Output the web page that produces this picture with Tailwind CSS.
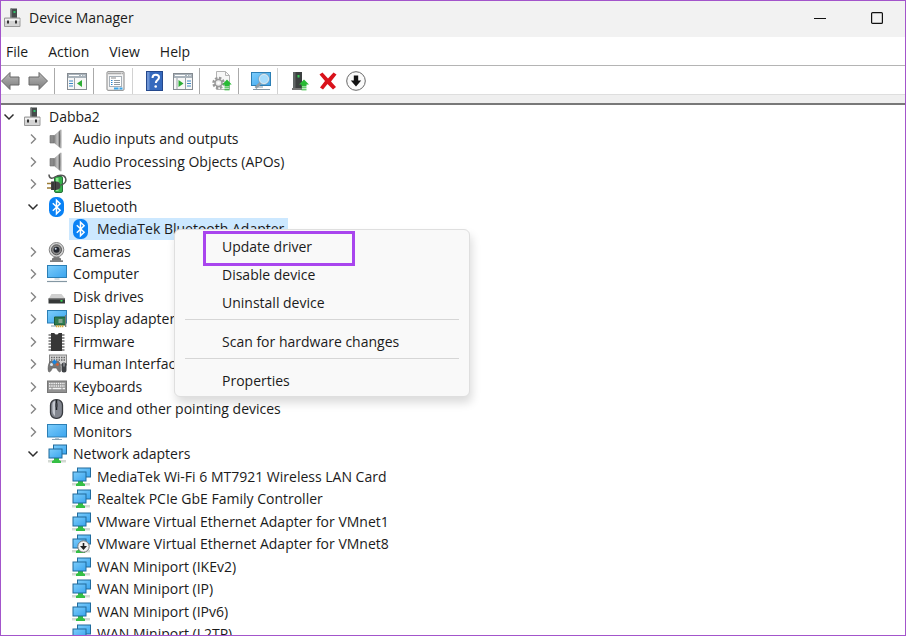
<!DOCTYPE html>
<html lang="en">
<head>
  <meta charset="utf-8">
  <meta name="viewport" content="width=device-width, initial-scale=1">
  <title>Device Manager</title>
  <script src="https://cdn.jsdelivr.net/npm/@tailwindcss/browser@4"></script>
</head>
<body class="relative flex h-screen flex-col overflow-hidden border border-[#a355cb] bg-white font-['Open_Sans','Noto_Sans',sans-serif] text-sm text-[#1b1b1b]">

  <!-- icon sprite, kept in the layout so its gradients still paint -->
  <svg class="absolute size-0" aria-hidden="true">
    <defs>
      <linearGradient id="screen" x1="0" y1="0" x2="1" y2="1">
        <stop offset="0" stop-color="#7dcdfb"/><stop offset="1" stop-color="#3aa4ee"/>
      </linearGradient>
      <linearGradient id="metal" x1="0" y1="0" x2="1" y2="0">
        <stop offset="0" stop-color="#7c7c7c"/><stop offset=".5" stop-color="#c2c2c2"/><stop offset="1" stop-color="#6a6a6a"/>
      </linearGradient>
      <linearGradient id="arrow" x1="0" y1="0" x2="0" y2="1">
        <stop offset="0" stop-color="#b9b9b9"/><stop offset="1" stop-color="#7d7d7d"/>
      </linearGradient>
    </defs>
    <symbol id="device" viewBox="0 0 20 20">
      <path d="M7.500 .5h6.500v10h-6.500z" fill="#454b4b"/><path d="M7.500 .5h1.500v10h-1.500z" fill="#6b7070"/>
      <rect x="10.500" y="3" width="2" height="2" fill="#2fc46a"/>
      <path d="M1.500 10h15.500v8.500h-15.500z" fill="#d4d4d4" stroke="#9a9a9a"/><path d="M2 11h14.500v2h-14.500z" fill="#efefef"/>
      <path d="M4 12.500h2v3h-2zM12 12.500h2v3h-2z" fill="#333"/>
    </symbol>
    <symbol id="speaker" viewBox="0 0 20 20">
      <path d="M3 6.500h4v7.500h-4z" fill="#8a8a8a" stroke="#6d6d6d" stroke-width=".6"/>
      <path d="M7 6.500L13.500 .7V19.300L7 14z" fill="url(#metal)"/><path d="M12 1.500c2 4 2 13 0 17z" fill="#6a6a6a"/>
      <path d="M13.300 .7h1.200v18.600h-1.200z" fill="#a6a6a6"/>
    </symbol>
    <symbol id="battery" viewBox="0 0 20 20">
      <path d="M8 2.500h6V1h-4v1.500z" fill="#999"/><rect x="7.500" y="2.500" width="8" height="16" rx="1.500" fill="#36b24a" stroke="#27713a"/>
      <path d="M9 4h2.500v13h-2.500z" fill="#8ae58f"/>
      <path d="M2 .5c0 4 3 4.500 6 2.500s9-3 10.500 1-1.500 6-4.500 7" fill="none" stroke="#555" stroke-width="1.500"/>
      <path d="M0 9.500h4M0 14h4" stroke="#9b7b35" stroke-width="1.600"/>
      <path d="M4 7.500h5c3 0 4.500 2 4.500 4.300s-1.500 4.200-4.500 4.200h-5z" fill="#454545"/><path d="M6 7.500v8.500M8.500 7.500v8.500" stroke="#222" stroke-width=".7"/>
    </symbol>
    <symbol id="bluetooth" viewBox="0 0 20 20">
      <rect x="2" y="0" width="15" height="20" rx="6.500" fill="#0a82f5"/>
      <path d="M5.800 6.200l7.300 7-3.600 3.500V3.300l3.600 3.500-7.300 7" fill="none" stroke="#fff" stroke-width="1.500"/>
    </symbol>
    <symbol id="camera" viewBox="0 0 20 20">
      <path d="M5 16.500l3-2h3l3 2v2h-9z" fill="#777"/><path d="M3 18.500h13v1.200h-13z" fill="#4a4a4a"/>
      <circle cx="9.500" cy="7.800" r="7.300" fill="#d2d2d2" stroke="#858585"/><circle cx="9.500" cy="7.800" r="5" fill="#8b8b8b" stroke="#555"/>
      <circle cx="9.500" cy="7.800" r="3" fill="#23272f"/><circle cx="8.700" cy="6.800" r="1" fill="#c9d4e5"/>
    </symbol>
    <symbol id="computer" viewBox="0 0 20 20">
      <rect x=".5" y="1.500" width="19" height="12" fill="url(#screen)" stroke="#2c7fb5"/>
      <path d="M7.500 14h5v2h-5z" fill="#d5dde2"/><path d="M0 17.500h20" stroke="#8497a3" stroke-width="1.200"/>
    </symbol>
    <symbol id="disk" viewBox="0 0 20 20">
      <path d="M4.500 7h10l4 5h-17z" fill="#d0d0d0"/><path d="M1.500 11.500h16.500v5h-16.500z" fill="#353838"/>
      <path d="M1.500 11.500h16.500v1h-16.500z" fill="#757575"/><rect x="13.500" y="13" width="2" height="1.700" fill="#37db54"/>
    </symbol>
    <symbol id="display" viewBox="0 0 20 20">
      <rect x=".5" y="1.500" width="19" height="12.500" fill="url(#screen)" stroke="#2c7fb5"/>
      <path d="M4 17h5" stroke="#8497a3"/><path d="M7.500 8h11v8h-11z" fill="#2f7b50" stroke="#1d5938"/>
      <path d="M18.700 6v12" stroke="#7b7b7b" stroke-width="1.300"/><path d="M11.500 10h4v4h-4z" fill="#83a590"/>
      <path d="M9 17.200h8" stroke="#d4a83a" stroke-width="2" stroke-dasharray="1.400 .6"/>
    </symbol>
    <symbol id="firmware" viewBox="0 0 20 20">
      <path d="M1.500 3h16M1.500 6h16M1.500 9h16M1.500 12h16M1.500 15h16M1.500 18h16" stroke="#6f6f6f" stroke-width="1.600"/>
      <path d="M4 1h3.500c0 2.500 4 2.500 4 0h3.500v18h-11z" fill="#373737"/>
    </symbol>
    <symbol id="hid" viewBox="0 0 20 20">
      <rect x="2.500" y="1" width="17" height="10" fill="#d6d6d6" stroke="#858585"/>
      <path d="M4 3.500h14M4 6h14" stroke="#676767" stroke-width="1.500" stroke-dasharray="1.500 1"/>
      <path d="M3 7.500h8.500c1.500 1 2.500 6 2 10-1.500 1.500-3-1.500-4-3.500h-4c-1 2-2.500 5-4 3.500-1-3 0-8 1.500-10z" fill="#777" stroke="#555" stroke-width=".6"/>
      <circle cx="4.500" cy="10.500" r="1.500" fill="#d7e8f5"/><path d="M7.500 5.500l2.500 2.500-2.500 2.500-2.500-2.500z" fill="#1783df"/><circle cx="10.500" cy="10.500" r="1.300" fill="#e35c2d"/>
      <rect x="14.500" y="8.500" width="5" height="10" rx="2.500" fill="#3e4145"/><path d="M17 9v3.500" stroke="#b4b7bd"/>
    </symbol>
    <symbol id="keyboard" viewBox="0 0 20 20">
      <rect x=".5" y="4" width="19" height="11.500" fill="#919191" stroke="#777"/>
      <path d="M2 6.500h16M2 9h16" stroke="#f2f2f2" stroke-width="1.700" stroke-dasharray="1.500 .7"/>
      <path d="M2 11.500h2.500M5.500 11.500h9M15.500 11.500h2.500" stroke="#f2f2f2" stroke-width="1.500"/>
    </symbol>
    <symbol id="mouse" viewBox="0 0 20 20">
      <rect x="3.500" y=".7" width="12" height="18.600" rx="5.500" fill="#82868f" stroke="#383b40" stroke-width="1.300"/>
      <path d="M5.500 6c0-3 1-4 2.500-4v15c-1.500-1-2.500-3-2.500-6z" fill="#c3c7ce"/><path d="M9.500 1v10" stroke="#1f2225" stroke-width="1.500"/><rect x="8.500" y="4" width="2" height="4.500" rx="1" fill="#3a3d42"/>
    </symbol>
    <symbol id="monitor" viewBox="0 0 20 20">
      <rect x=".5" y="2.500" width="19" height="12.500" fill="url(#screen)" stroke="#2c7fb5"/>
      <path d="M8 15.500h4v1.500h-4z" fill="#b5c6d2"/><path d="M5 17.500h10" stroke="#8ba3b3"/>
    </symbol>
    <symbol id="network" viewBox="0 0 20 20">
      <rect x="6.500" y="1" width="13" height="9" fill="url(#screen)" stroke="#216b9c"/>
      <path d="M1 16h18v2.500h-18z" fill="#d3d9d3"/><path d="M7 14h5v2l2 1v2h-9v-2l2-1z" fill="#35bf45"/>
      <rect x="2" y="5" width="13" height="9" fill="url(#screen)" stroke="#216b9c"/>
    </symbol>
    <symbol id="network-off" viewBox="0 0 20 20">
      <use href="#network"/><circle cx="12.500" cy="12.500" r="5.700" fill="#f4f4f4" stroke="#777"/>
      <path d="M12.500 9v5" stroke="#222" stroke-width="1.600"/><path d="M9 12h7l-3.500 4z" fill="#222"/>
    </symbol>
    <symbol id="open" viewBox="0 0 16 16"><path d="M3.500 5.500l4.500 4.500 4.500-4.500" fill="none" stroke="#2e2e2e" stroke-width="1.500"/></symbol>
    <symbol id="closed" viewBox="0 0 16 16"><path d="M6 3.500l4.500 4.500-4.500 4.500" fill="none" stroke="#858585" stroke-width="1.400"/></symbol>
  </svg>

  <header class="flex h-9 shrink-0 items-center bg-[#f2f2f2] pb-0.5">
    <svg class="ml-0.5 size-5" aria-hidden="true"><use href="#device"/></svg>
    <h1 class="ml-1.5 flex-1">Device Manager</h1>
    <div class="flex gap-px self-stretch">
      <button class="flex w-14 items-center justify-center" aria-label="Minimize">
        <svg class="size-3" viewBox="0 0 12 12"><path d="M0 6.500h12" stroke="#111"/></svg>
      </button>
      <button class="flex w-14 items-center justify-center" aria-label="Maximize">
        <svg class="size-3" viewBox="0 0 12 12"><rect x=".6" y=".6" width="10.800" height="10.800" rx="1" fill="none" stroke="#111" stroke-width="1.200"/></svg>
      </button>
    </div>
  </header>

  <nav class="flex h-7 shrink-0 items-center gap-5 pt-0.5 pl-[5px]">
    <button>File</button>
    <button>Action</button>
    <button>View</button>
    <button>Help</button>
  </nav>

  <div class="flex h-[30px] shrink-0 items-center gap-2 border-y border-t-[#b4b4b4] border-b-[#dedede] pt-0.5">
    <button class="w-[19px]" aria-label="Back">
      <svg class="h-5 w-[19px]" viewBox="0 0 19 20"><path d="M.5 10L9 1.500V6h9v8H9v4.500z" fill="url(#arrow)" stroke="#686868"/></svg>
    </button>
    <button aria-label="Forward">
      <svg class="size-5" viewBox="0 0 20 20"><path d="M19.500 10L11 1.500V6H1v8h10v4.500z" fill="url(#arrow)" stroke="#686868"/></svg>
    </button>
    <span class="-ml-0.5 mr-1 h-[26px] w-px bg-[#aaa]"></span>
    <button aria-label="Show/Hide Console Tree">
      <svg class="size-5" viewBox="0 0 20 20">
        <rect x=".5" y="2.500" width="19" height="16" fill="#f7f7f7" stroke="#858b91"/><path d="M1 3h18v4H1z" fill="#a9b3bb"/>
        <path d="M2 4.500h10M14 4.500h1M16.500 4.500h1" stroke="#fff"/><path d="M7.500 7v11" stroke="#9aa1a7"/><path d="M2 10h4M2 12.500h4M2 15h4" stroke="#3f87c4" stroke-width="1.200"/>
        <path d="M15 9v7l-5-3.500z" fill="#2dad35"/>
      </svg>
    </button>
    <span class="-ml-0.5 mr-1 h-[26px] w-px bg-[#aaa]"></span>
    <button aria-label="Properties">
      <svg class="size-5" viewBox="0 0 20 20">
        <rect x="1" y=".7" width="17" height="18.600" rx="1" fill="#f4f4f4" stroke="#858585"/><path d="M2 2.500h13M15.500 2.500h1.500" stroke="#a9a9a9" stroke-width="1.500"/>
        <rect x="3.500" y="5.500" width="12" height="10" fill="#fff" stroke="#a7b0b8"/><path d="M5 7h5" stroke="#888"/>
        <path d="M5 9.500h1.500M5 11.500h1.500M5 13.500h1.500" stroke="#2783ce"/><path d="M8 9.500h6M8 11.500h6M8 13.500h6" stroke="#8c979f"/>
        <path d="M8 17.500h4.500M13.500 17.500h3" stroke="#38a3e8" stroke-width="1.800"/>
      </svg>
    </button>
    <span class="-ml-0.5 mr-1 h-[26px] w-px bg-[#d2d2d2]"></span>
    <button aria-label="Help">
      <svg class="size-5" viewBox="0 0 20 20">
        <rect x="1.500" y=".5" width="16" height="19" fill="#3569bd" stroke="#24488c"/><path d="M2 1h2.500v18H2z" fill="#6d94d4"/>
        <path d="M7.500 7c0-4.500 6.500-4 6.500-.5 0 2.500-3.200 2.500-3.200 5.500" fill="none" stroke="#fff" stroke-width="2"/><circle cx="10.700" cy="15.500" r="1.300" fill="#fff"/>
      </svg>
    </button>
    <button aria-label="Show/Hide Action Pane">
      <svg class="size-5" viewBox="0 0 20 20">
        <rect x=".5" y="2.500" width="19" height="16" fill="#f7f7f7" stroke="#858b91"/><path d="M1 3h18v4H1z" fill="#a9b3bb"/>
        <path d="M2 4.500h10M14 4.500h1M16.500 4.500h1" stroke="#fff"/><path d="M12.500 7v11M4 7v11" stroke="#9aa1a7"/><path d="M14 10h4M14 12.500h4M14 15h4" stroke="#3f87c4" stroke-width="1.200"/>
        <path d="M5.500 9v7l5-3.500z" fill="#2dad35"/>
      </svg>
    </button>
    <span class="-ml-0.5 mr-1 h-[26px] w-px bg-[#aaa]"></span>
    <button aria-label="Update driver">
      <svg class="size-5" viewBox="0 0 20 20">
        <path d="M4.500 .5h9l4 4v14h-13z" fill="#f7f7f7" stroke="#b3b3b3"/><path d="M13.500 .5v4h4" fill="none" stroke="#b3b3b3"/>
        <circle cx="6.500" cy="12" r="5" fill="none" stroke="#999" stroke-width="2.500" stroke-dasharray="2.400 1.500"/><circle cx="6.500" cy="12" r="3.500" fill="#ededed" stroke="#999" stroke-width="1.500"/><circle cx="6.500" cy="12" r="1.200" fill="#fff"/>
        <path d="M15 8.500l4.700 5h-2.200v2h-5v-2h-2.200z" fill="#28ba34"/><path d="M12.500 16.800h5M12.500 18.800h5" stroke="#28ba34"/>
      </svg>
    </button>
    <span class="-ml-0.5 mr-1 h-[26px] w-px bg-[#aaa]"></span>
    <button aria-label="Scan for hardware changes">
      <svg class="size-5" viewBox="0 0 20 20">
        <rect x=".5" y="1.500" width="19" height="13" fill="url(#screen)" stroke="#2c7fb5"/><path d="M2 18.500h17M7 16h5" stroke="#8497a3" stroke-width="1.200"/>
        <path d="M10 11.500l-5.500 5.500" stroke="#8f9ca5" stroke-width="2.600"/><circle cx="13" cy="8" r="4.700" fill="#a7dcfb" stroke="#dbe9f1" stroke-width="1.400"/><circle cx="13" cy="8" r="5.500" fill="none" stroke="#7394a8" stroke-width=".6"/>
      </svg>
    </button>
    <span class="-ml-0.5 mr-1 h-[26px] w-px bg-[#d2d2d2]"></span>
    <button aria-label="Enable device">
      <svg class="size-5" viewBox="0 0 20 20">
        <path d="M3 1h9v16H3z" fill="#3c4040"/><path d="M3 1h2.500v16H3z" fill="#606565"/><rect x="7.500" y="4" width="2" height="2.500" fill="#35cf54"/><path d="M2 17h10v2H2z" fill="#777"/>
        <path d="M14 8.500l5 5h-2.500v2h-5v-2H9z" fill="#28ba34"/><path d="M11.500 16.800h5M11.500 18.800h5" stroke="#28ba34"/>
      </svg>
    </button>
    <button aria-label="Uninstall device">
      <svg class="size-5" viewBox="0 0 20 20"><path d="M1.500 3.500l3-2 5.500 6 5.500-6 3 2L13 10.500l5 5.500-3 2.500-5.500-5.500L5 18.500l-3-2L7 10z" fill="#d9121b"/></svg>
    </button>
    <button aria-label="Disable device">
      <svg class="size-5" viewBox="0 0 20 20"><circle cx="10" cy="10" r="9.300" fill="#fafafa" stroke="#666"/><path d="M7.800 4.500h4.400v5h3L10 15.500l-5.200-6h3z" fill="#111"/></svg>
    </button>
  </div>
  <div class="h-2.5 shrink-0 border-b-2 border-[#787878] bg-[#efefef]"></div>

  <ul id="tree" role="tree" class="min-h-0 flex-1 overflow-hidden"></ul>

  <div role="menu" class="absolute top-[228px] left-[173px] flex w-[296px] flex-col rounded-md border border-[#dfdfdf] bg-[#f9f9f9] pt-[3px] pb-px shadow-[2px_6px_10px_rgba(0,0,0,0.14)]">
    <button role="menuitem" class="h-7 pl-[47px] text-left">Update driver</button>
    <button role="menuitem" class="h-7 pl-[47px] text-left">Disable device</button>
    <button role="menuitem" class="h-7 pl-[47px] text-left">Uninstall device</button>
    <hr class="mx-2.5 mt-0.5 mb-2 border-[#d6d6d6]">
    <button role="menuitem" class="h-7 pl-[47px] text-left">Scan for hardware changes</button>
    <hr class="mx-2.5 mt-0.5 mb-2 border-[#d6d6d6]">
    <button role="menuitem" class="h-7 pl-[47px] text-left">Properties</button>
    <div class="pointer-events-none absolute top-px left-7 h-[35px] w-[152px] border-3 border-[#a945ee]"></div>
  </div>

  <script>
    const devices = [
      { level: 0, icon: 'device', name: 'Dabba2', state: 'open' },
      { level: 1, icon: 'speaker', name: 'Audio inputs and outputs', state: 'closed' },
      { level: 1, icon: 'speaker', name: 'Audio Processing Objects (APOs)', state: 'closed' },
      { level: 1, icon: 'battery', name: 'Batteries', state: 'closed' },
      { level: 1, icon: 'bluetooth', name: 'Bluetooth', state: 'open' },
      { level: 2, icon: 'bluetooth', name: 'MediaTek Bluetooth Adapter', selected: true },
      { level: 1, icon: 'camera', name: 'Cameras', state: 'closed' },
      { level: 1, icon: 'computer', name: 'Computer', state: 'closed' },
      { level: 1, icon: 'disk', name: 'Disk drives', state: 'closed' },
      { level: 1, icon: 'display', name: 'Display adapters', state: 'closed' },
      { level: 1, icon: 'firmware', name: 'Firmware', state: 'closed' },
      { level: 1, icon: 'hid', name: 'Human Interface Devices', state: 'closed' },
      { level: 1, icon: 'keyboard', name: 'Keyboards', state: 'closed' },
      { level: 1, icon: 'mouse', name: 'Mice and other pointing devices', state: 'closed' },
      { level: 1, icon: 'monitor', name: 'Monitors', state: 'closed' },
      { level: 1, icon: 'network', name: 'Network adapters', state: 'open' },
      { level: 2, icon: 'network', name: 'MediaTek Wi-Fi 6 MT7921 Wireless LAN Card' },
      { level: 2, icon: 'network', name: 'Realtek PCIe GbE Family Controller' },
      { level: 2, icon: 'network', name: 'VMware Virtual Ethernet Adapter for VMnet1' },
      { level: 2, icon: 'network-off', name: 'VMware Virtual Ethernet Adapter for VMnet8' },
      { level: 2, icon: 'network', name: 'WAN Miniport (IKEv2)' },
      { level: 2, icon: 'network', name: 'WAN Miniport (IP)' },
      { level: 2, icon: 'network', name: 'WAN Miniport (IPv6)' },
      { level: 2, icon: 'network', name: 'WAN Miniport (L2TP)' }
    ];

    const indent = ['pl-0', 'pl-6', 'pl-12'];

    document.getElementById('tree').innerHTML = devices.map(d => `
      <li role="treeitem" class="flex items-center gap-1 odd:h-[23px] even:h-[22px] ${indent[d.level]}">
        ${d.state
          ? `<button class="size-4" aria-label="Toggle ${d.name}"><svg class="size-4"><use href="#${d.state}"/></svg></button>`
          : '<span class="size-4"></span>'}
        <span class="flex h-full items-center gap-1.5 pr-1 pl-0.5 whitespace-nowrap ${d.selected ? 'bg-[#cce8ff]' : ''}">
          <svg class="size-5" aria-hidden="true"><use href="#${d.icon}"/></svg>${d.name}
        </span>
      </li>`).join('');
  </script>
</body>
</html>
